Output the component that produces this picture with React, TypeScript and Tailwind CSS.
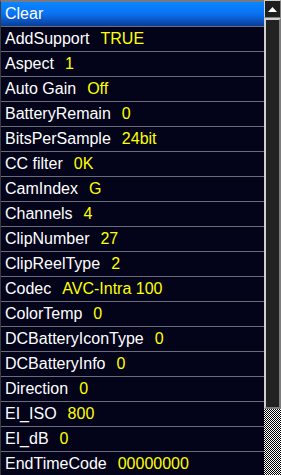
import React from 'react';

const rows: [string, string][] = [
  ['AddSupport', 'TRUE'],
  ['Aspect', '1'],
  ['Auto Gain', 'Off'],
  ['BatteryRemain', '0'],
  ['BitsPerSample', '24bit'],
  ['CC filter', '0K'],
  ['CamIndex', 'G'],
  ['Channels', '4'],
  ['ClipNumber', '27'],
  ['ClipReelType', '2'],
  ['Codec', 'AVC-Intra 100'],
  ['ColorTemp', '0'],
  ['DCBatteryIconType', '0'],
  ['DCBatteryInfo', '0'],
  ['Direction', '0'],
  ['EI_ISO', '800'],
  ['EI_dB', '0'],
  ['EndTimeCode', '00000000'],
];

const Row = ({ name, value }: { name: string; value: string }) => (
  <div className="flex h-[25px] shrink-0 items-center border-b border-[#6c6c78] pl-[4px] leading-[24px] whitespace-nowrap">
    <span className="text-white">{name}</span>
    <span className="ml-[11px] text-[#ffff00]">{value}</span>
  </div>
);

const App = () => {
  return (
    <div className="flex h-[475px] w-[281px] overflow-hidden bg-[#03031a] font-['Liberation_Sans',Arial,sans-serif] text-[16px]">
      <div className="flex w-[264px] flex-col overflow-hidden border-t-2 border-l border-t-[#7a7a84] border-l-[#3a3a40]">
        <div className="flex h-[25px] shrink-0 items-center border-b border-[#6c6c78] bg-linear-to-b from-[#0a86ff] via-[#0a72f2] to-[#0a3c98] pl-[4px] leading-[24px] text-white">
          Clear
        </div>
        {rows.map(([n, v]) => (
          <Row key={n} name={n} value={v} />
        ))}
      </div>
      <div className="flex w-[17px] flex-col">
        <div className="flex h-[18px] shrink-0 items-center justify-center border border-t-[#d0d0d0] border-l-[#d0d0d0] border-r-[#808080] border-b-[#808080] bg-[#1e1e1e]">
          <svg width="9" height="5" viewBox="0 0 9 5">
            <path d="M0 5 L4.5 0 L9 5 Z" fill="#ffffff" />
          </svg>
        </div>
        <div className="h-[391px] shrink-0 border-2 border-t-[#cfcfcf] border-l-[#cfcfcf] border-r-[#7c7c7c] border-b-[#7c7c7c] bg-[#222222]" />
        <div className="flex-1 bg-[image:conic-gradient(#000_25%,#fff_0_50%,#000_0_75%,#fff_0)] bg-[length:2px_2px]" />
      </div>
    </div>
  );
};

export default App;
